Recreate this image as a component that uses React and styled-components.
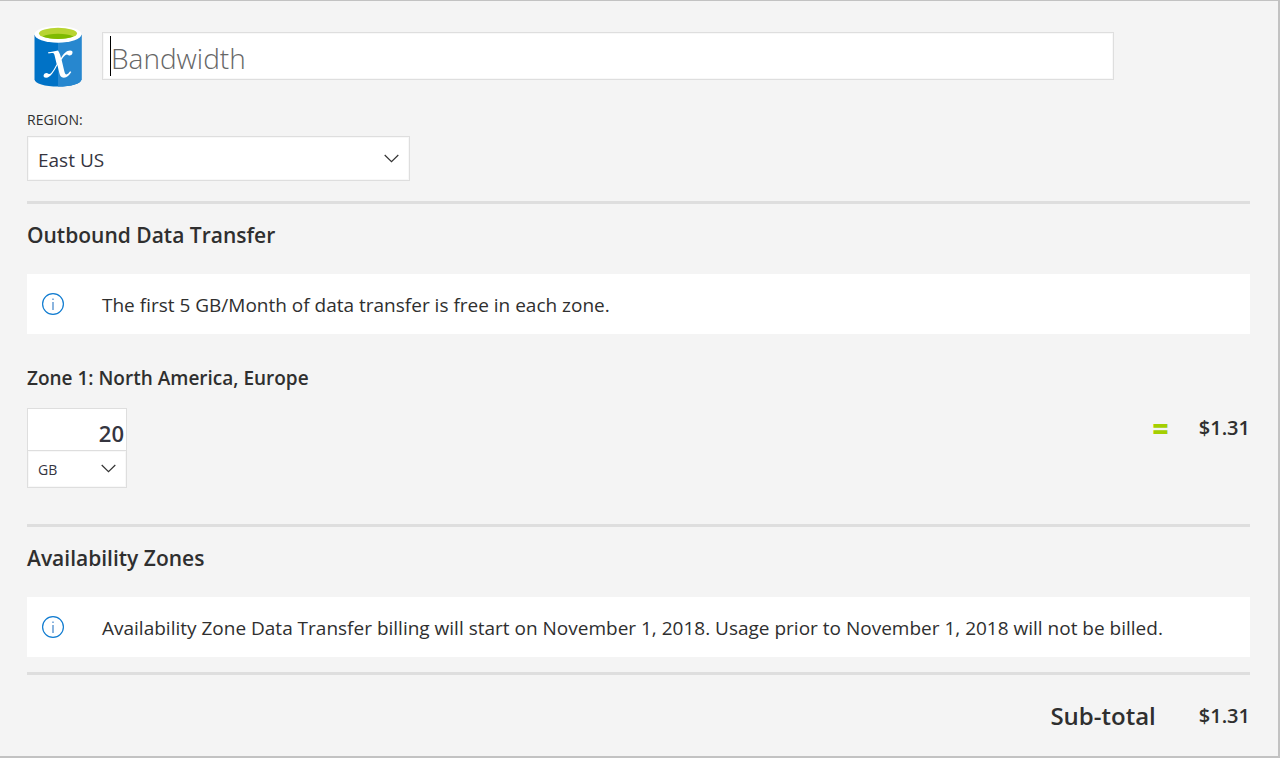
import React, { useState } from "react";
import styled, { createGlobalStyle } from "styled-components";

const GlobalStyle = createGlobalStyle`
  *, *::before, *::after { box-sizing: border-box; }
  body {
    margin: 0;
    background: #f4f4f4;
    color: #2f2f2f;
    font-family: "Segoe UI", "Open Sans", "Noto Sans", sans-serif;
    font-size: 19px;
  }
`;

const Panel = styled.main`
  min-height: 100vh;
  padding: 25px 28px 20px 27px;
  border: solid #c2c2c2;
  border-width: 1px 2px 2px 0;
  background: #f4f4f4;
`;

const Header = styled.header`
  display: flex;
  align-items: flex-start;
  height: 62px;
`;

const LogoSlot = styled.div`
  flex: none;
  width: 75px;
  padding-left: 7px;
  svg { display: block; }
`;

const NameField = styled.div`
  position: relative;
  flex: 1;
  margin: 6px 136px 0 0;
`;

const NameInput = styled.input`
  display: block;
  width: 100%;
  height: 48px;
  padding: 4px 8px 0;
  border: 1px solid #dedede;
  box-shadow: inset 0 0 0 1px #f8f8f8;
  background: #fff;
  color: #2f2f2f;
  font: 300 28px/40px "Segoe UI", "Open Sans", sans-serif;
  outline: none;
  &::placeholder { color: #666; opacity: 1; }
`;

const Caret = styled.span`
  position: absolute;
  left: 8px;
  top: 4px;
  width: 1px;
  height: 40px;
  background: #000;
`;

const FieldLabel = styled.label`
  display: block;
  margin: 22px 0 6px;
  font-size: 14px;
  line-height: 20px;
`;

const SelectBox = styled.div`
  position: relative;
  width: ${(p) => p.$width};
  max-width: 100%;
  svg {
    position: absolute;
    right: 11px;
    top: 50%;
    margin-top: -5px;
    pointer-events: none;
  }
`;

const Select = styled.select`
  display: block;
  width: 100%;
  height: ${(p) => (p.$compact ? 38 : 45)}px;
  padding: ${(p) => (p.$compact ? 0 : 2)}px 30px 0 10px;
  appearance: none;
  border: 1px solid #dedede;
  border-radius: 0;
  box-shadow: inset 0 0 0 1px #f8f8f8;
  background: #fff;
  color: #35353f;
  font-family: inherit;
  font-size: ${(p) => (p.$compact ? 14 : 19)}px;
`;

const Divider = styled.hr`
  height: 3px;
  margin: ${(p) => p.$space}px 0 0;
  border: 0;
  background: #dedede;
`;

const SectionTitle = styled.h2`
  margin: 16px 0 24px;
  font-size: 21px;
  font-weight: 600;
  line-height: 30px;
`;

const Notice = styled.div`
  display: flex;
  align-items: center;
  min-height: 60px;
  padding: 0 15px;
  background: #fff;
  svg { flex: none; margin-right: 37px; }
  p { margin: 0; padding-top: 2px; line-height: 26px; }
`;

const ZoneTitle = styled.h3`
  margin: 29px 0 15px;
  font-size: 19px;
  font-weight: 600;
  line-height: 30px;
`;

const UsageRow = styled.div`
  display: flex;
  align-items: flex-start;
  justify-content: space-between;
`;

const Usage = styled.div`
  width: 100px;
`;

const Amount = styled.input`
  display: block;
  width: 100%;
  height: 42px;
  padding: 7px 2px 0;
  border: 1px solid #dedede;
  border-bottom: 0;
  border-radius: 0;
  background: #fff;
  color: #35353f;
  font: 600 22px/32px "Segoe UI", "Open Sans", sans-serif;
  text-align: right;
`;

const Result = styled.div`
  display: flex;
  align-items: center;
  justify-content: flex-end;
  line-height: 40px;
`;

const Equals = styled.span`
  margin-right: 30px;
  color: #a4cf00;
  font-size: 28px;
  font-weight: 800;
`;

const Price = styled.span`
  font-size: 20px;
  font-weight: 600;
`;

const Total = styled(Result)`
  margin-top: 21px;
`;

const TotalLabel = styled.span`
  margin-right: 43px;
  font-size: 24px;
  font-weight: 600;
`;

function DatabaseLogo() {
  return (
    <svg width="48" height="61" viewBox="0 0 48 62" preserveAspectRatio="none" aria-hidden="true">
      <path d="M.5 9v45c0 4.300 10.500 7.500 23.500 7.500S47.500 58.300 47.500 54V9z" fill="#0072c6" />
      <path d="M24 9h23.500v45c0 4.300-10.500 7.500-23.500 7.500z" fill="#2787cf" />
      <ellipse cx="24" cy="8.500" rx="23.500" ry="8.500" fill="#fff" />
      <ellipse cx="24" cy="7.500" rx="19" ry="5.700" fill="#b8d432" />
      <path d="M8.500 10.700C12 8.900 17.500 8 24 8s12 .9 15.500 2.700C36 12.400 30.500 13.200 24 13.200S12 12.400 8.500 10.700z" fill="#7fba00" />
      <path
        d="M14 26.800c3.500-.3 7-1.300 10-1.800 1.500 2.200 2.400 4.700 3 7.500 2.500-4 5.500-7.500 9-7.500 2.300 0 2.900 1.300 2.400 2.800-.4 1.500-1.500 2.300-2.700 2.300-1.300 0-1.700-1.200-2.900-1.200-1.700 0-3.600 2.700-5.200 5.300l2.600 11.300c.5 2.300 1.100 3.700 2.300 3.700 1.200 0 2.500-1.700 3.600-3.200l1.200.7c-2 3.400-4.200 5.800-7.400 5.800-3 0-4-2.100-4.700-5.200l-1.800-7.700c-3.100 5.900-6.700 12.900-11.300 12.900-2 0-2.900-1.100-2.400-2.700.4-1.400 1.500-2.100 2.700-2.100 1.500 0 1.900 1.200 3 1.200 2 0 5-5.800 7.300-10l-2.100-9c-.6-2.500-1.600-2.800-3.200-2.400l-2.900.5z"
        fill="#fff"
      />
    </svg>
  );
}

function Chevron() {
  return (
    <svg width="15" height="9" viewBox="0 0 15 9" aria-hidden="true">
      <path d="M.7 1l6.800 6.600L14.300 1" fill="none" stroke="#333" strokeWidth="1.200" />
    </svg>
  );
}

function InfoIcon() {
  return (
    <svg width="23" height="23" viewBox="0 0 23 23" aria-hidden="true">
      <circle cx="11" cy="11" r="10.400" fill="none" stroke="#0f7bd0" strokeWidth="1.200" />
      <path d="M11 9v8M11 5.500v1.600" stroke="#3f83c9" strokeWidth="1.200" />
    </svg>
  );
}

function InfoNotice({ children }) {
  return (
    <Notice>
      <InfoIcon />
      <p>{children}</p>
    </Notice>
  );
}

export default function App() {
  const [name, setName] = useState("");
  const [amount, setAmount] = useState("20");
  return (
    <>
      <GlobalStyle />
      <Panel>
        <Header>
          <LogoSlot><DatabaseLogo /></LogoSlot>
          <NameField>
            <NameInput
              type="text"
              aria-label="Bandwidth"
              placeholder="Bandwidth"
              value={name}
              onChange={(e) => setName(e.target.value)}
            />
            {!name && <Caret />}
          </NameField>
        </Header>

        <FieldLabel htmlFor="region">REGION:</FieldLabel>
        <SelectBox $width="383px">
          <Select id="region" defaultValue="East US">
            <option>East US</option>
          </Select>
          <Chevron />
        </SelectBox>

        <Divider $space={20} />
        <section>
          <SectionTitle>Outbound Data Transfer</SectionTitle>
          <InfoNotice>The first 5 GB/Month of data transfer is free in each zone.</InfoNotice>
          <ZoneTitle id="zone">Zone 1: North America, Europe</ZoneTitle>
          <UsageRow>
            <Usage>
              <Amount
                type="text"
                inputMode="numeric"
                aria-labelledby="zone"
                value={amount}
                onChange={(e) => setAmount(e.target.value)}
              />
              <SelectBox $width="100%">
                <Select $compact aria-label="Unit" defaultValue="GB">
                  <option>GB</option>
                </Select>
                <Chevron />
              </SelectBox>
            </Usage>
            <Result>
              <Equals>=</Equals>
              <Price>$1.31</Price>
            </Result>
          </UsageRow>
        </section>

        <Divider $space={36} />
        <section>
          <SectionTitle>Availability Zones</SectionTitle>
          <InfoNotice>
            Availability Zone Data Transfer billing will start on November 1, 2018. Usage prior to November 1, 2018 will not be billed.
          </InfoNotice>
        </section>

        <Divider $space={15} />
        <Total>
          <TotalLabel>Sub-total</TotalLabel>
          <Price>$1.31</Price>
        </Total>
      </Panel>
    </>
  );
}
